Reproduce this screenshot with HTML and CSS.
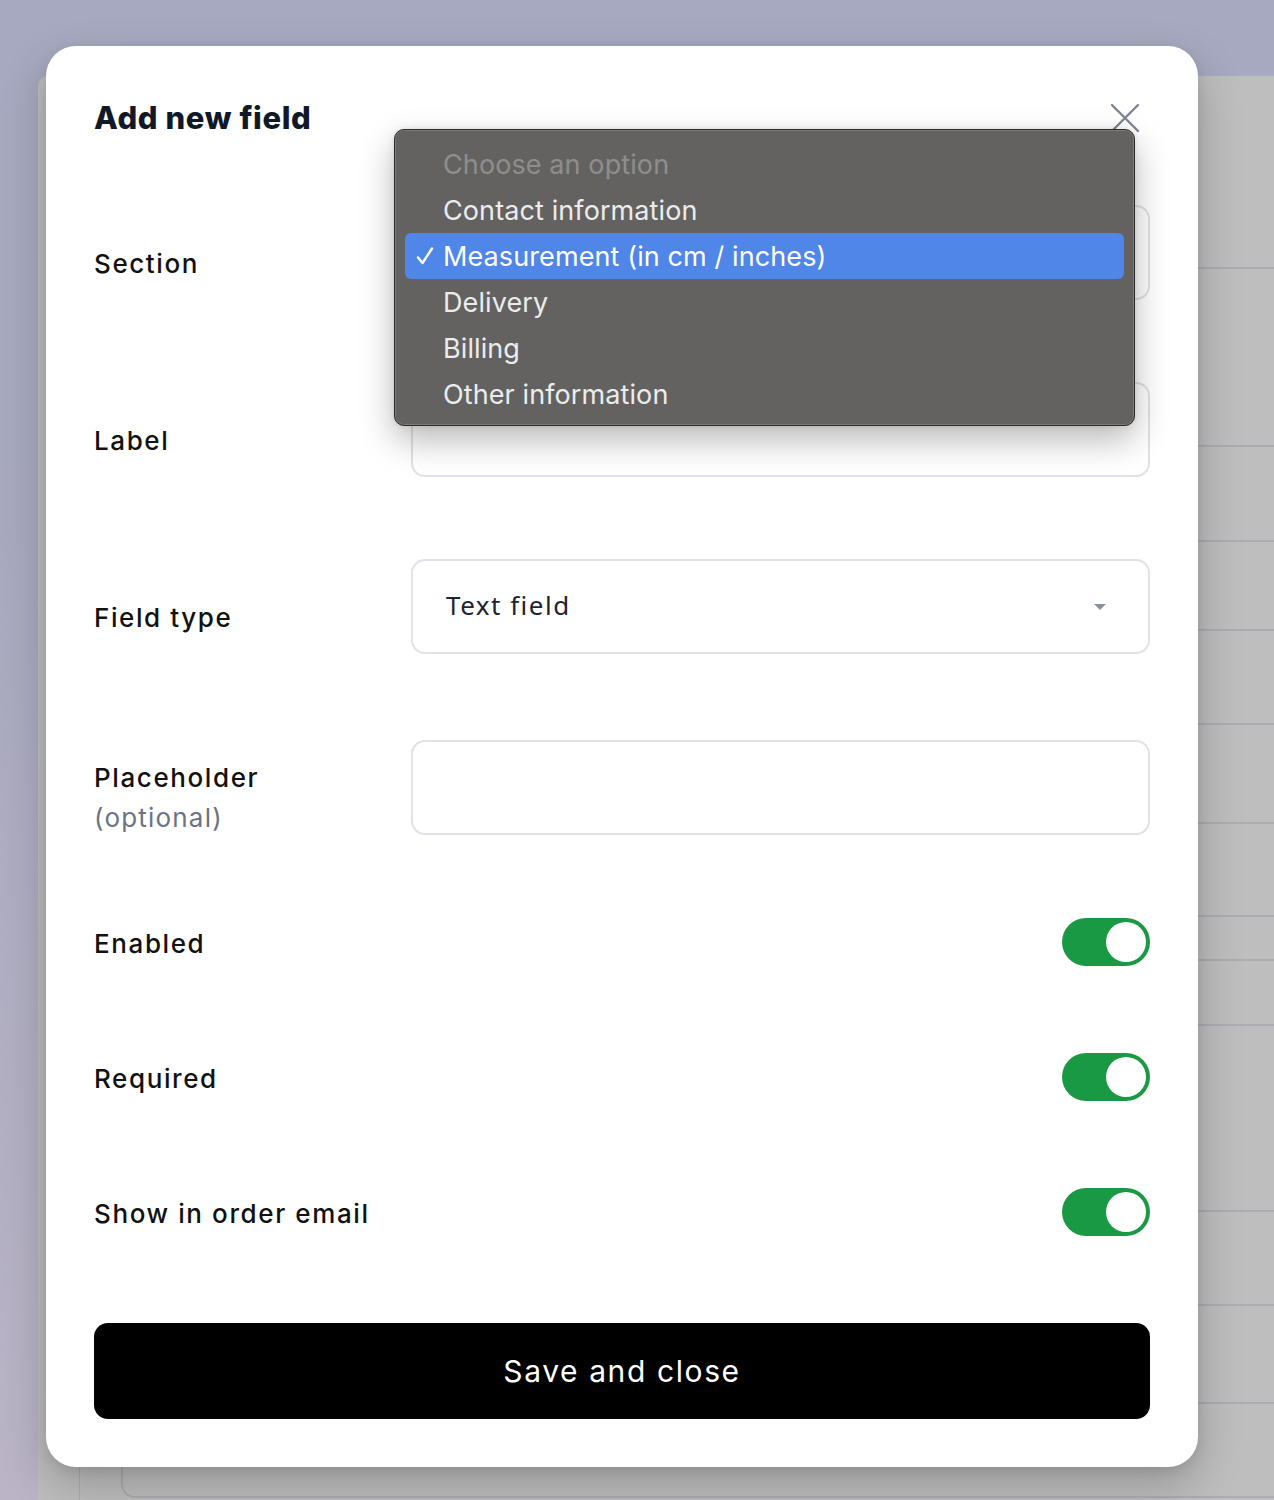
FILE: index.html
```html
<!DOCTYPE html>
<html lang="en">
<head>
<meta charset="utf-8">
<title>Add new field</title>
<link rel="stylesheet" href="styles.css">
</head>
<body>
  <!-- page behind the dialog -->
  <div class="page">
    <div class="sheet">
      <div class="rail"></div>
      <div class="sheet-body">
        <div class="line-row h193"></div>
        <div class="line-row h178"></div>
        <div class="line-row h95"></div>
        <div class="line-row h89"></div>
        <div class="line-row h94"></div>
        <div class="line-row h99"></div>
        <div class="line-row h93"></div>
        <div class="line-row h44"></div>
        <div class="line-row h65"></div>
        <div class="line-row h186"></div>
        <div class="line-row h94"></div>
        <div class="line-row h98"></div>
        <div class="last-box"></div>
      </div>
    </div>
  </div>

  <!-- dialog -->
  <div class="modal" role="dialog" aria-labelledby="modal-title">
    <header class="modal-head">
      <h2 id="modal-title" class="modal-title">Add new field</h2>
      <button class="close-btn" type="button" aria-label="Close">
        <svg width="30" height="30" viewBox="0 0 30 30" fill="none" stroke="#7f8492" stroke-width="2.4" stroke-linecap="round">
          <path d="M2 2 L28 28 M28 2 L2 28"/>
        </svg>
      </button>
    </header>

    <div class="form">
      <div class="field-row">
        <div class="field-label">Section</div>
        <div class="control">
          <div class="input select"><span class="select-value"></span><span class="caret"></span></div>
          <ul class="menu" role="listbox">
            <li class="menu-item muted"><span class="tick"></span>Choose an option</li>
            <li class="menu-item"><span class="tick"></span>Contact information</li>
            <li class="menu-item selected"><span class="tick"><svg width="18" height="18" viewBox="0 0 18 18" fill="none" stroke="#fff" stroke-width="2.4" stroke-linecap="round" stroke-linejoin="round"><path d="M2 10.5 L6.5 16 L16 1.5"/></svg></span>Measurement (in cm / inches)</li>
            <li class="menu-item"><span class="tick"></span>Delivery</li>
            <li class="menu-item"><span class="tick"></span>Billing</li>
            <li class="menu-item"><span class="tick"></span>Other information</li>
          </ul>
        </div>
      </div>

      <div class="field-row">
        <div class="field-label">Label</div>
        <div class="control"><div class="input"></div></div>
      </div>

      <div class="field-row">
        <div class="field-label">Field type</div>
        <div class="control">
          <div class="input select"><span class="select-value">Text field</span><span class="caret"></span></div>
        </div>
      </div>

      <div class="field-row">
        <div class="field-label">Placeholder<span class="optional">(optional)</span></div>
        <div class="control"><div class="input"></div></div>
      </div>

      <div class="toggle-row first">
        <div class="toggle-label">Enabled</div>
        <div class="toggle on"><span class="knob"></span></div>
      </div>
      <div class="toggle-row">
        <div class="toggle-label">Required</div>
        <div class="toggle on"><span class="knob"></span></div>
      </div>
      <div class="toggle-row">
        <div class="toggle-label">Show in order email</div>
        <div class="toggle on"><span class="knob"></span></div>
      </div>

      <button class="save-btn" type="button">Save and close</button>
    </div>
  </div>
</body>
</html>
```

FILE: styles.css
```css
html, body {
  margin: 0;
  padding: 0;
}

body {
  width: 1274px;
  height: 1500px;
  overflow: hidden;
  position: relative;
  background: linear-gradient(180deg, #a6a9bf 0%, #a8a9bf 35%, #bab4c6 100%);
  font-family: "Inter", "Liberation Sans", sans-serif;
}

/* ---------- page behind ---------- */
.page {
  padding: 76px 0 0 38px;
}

.sheet {
  display: flex;
  height: 1440px;
  background: #bebebe;
  border-top-left-radius: 10px;
}

.rail {
  width: 41px;
  flex: none;
  border-right: 1px solid #adacb2;
}

.sheet-body {
  flex: 1;
  display: flex;
  flex-direction: column;
}

.line-row {
  box-sizing: border-box;
  border-bottom: 2px solid #adacb1;
}

.h193 { height: 193px; }
.h178 { height: 178px; }
.h95 { height: 95px; }
.h89 { height: 89px; }
.h94 { height: 94px; }
.h99 { height: 99px; }
.h93 { height: 93px; }
.h44 { height: 44px; }
.h65 { height: 65px; }
.h186 { height: 186px; }
.h98 { height: 98px; }

.last-box {
  box-sizing: border-box;
  height: 94px;
  margin-left: 41px;
  border-left: 2px solid #adacb1;
  border-bottom: 2px solid #adacb1;
  border-bottom-left-radius: 14px;
}

/* ---------- dialog ---------- */
.modal {
  position: absolute;
  left: 46px;
  top: 46px;
  width: 1152px;
  height: 1421px;
  box-sizing: border-box;
  padding: 48px 48px 48px 48px;
  background: #ffffff;
  border-radius: 30px;
  box-shadow: 0 18px 45px rgba(0, 0, 0, 0.22), 0 4px 12px rgba(0, 0, 0, 0.08);
}

.modal-head {
  display: flex;
  align-items: center;
  justify-content: space-between;
  height: 48px;
}

.modal-title {
  margin: 0;
  font-size: 31px;
  line-height: 48px;
  font-weight: 800;
  color: #111827;
  letter-spacing: 0.6px;
}

.close-btn {
  border: 0;
  background: none;
  padding: 0;
  margin-right: 10px;
  display: flex;
}

.form {
  display: flex;
  flex-direction: column;
  margin-top: 63px;
}

.field-row {
  display: grid;
  grid-template-columns: 317px 1fr;
  align-items: center;
}

.field-row + .field-row {
  margin-top: 82px;
}

.field-label {
  padding-top: 22px;
  font-size: 26px;
  line-height: 40px;
  font-weight: 500;
  color: #111111;
  letter-spacing: 1.6px;
  display: flex;
  flex-direction: column;
}

.optional {
  font-weight: 400;
  color: #6b7385;
  letter-spacing: 1.2px;
}

.control {
  position: relative;
}

.input {
  box-sizing: border-box;
  height: 95px;
  border: 2px solid #e1e2e7;
  border-radius: 14px;
  background: #fff;
}

.select {
  display: flex;
  align-items: center;
  justify-content: space-between;
  padding: 0 42px 3px 33px;
}

.select-value {
  font-family: "Noto Sans", "Liberation Sans", sans-serif;
  font-size: 26px;
  color: #1f2430;
  letter-spacing: 1.5px;
}

.caret {
  width: 0;
  height: 0;
  margin-top: 3px;
  border-left: 6px solid transparent;
  border-right: 6px solid transparent;
  border-top: 6px solid #8a8f9b;
}

/* open native-style option list */
.menu {
  position: absolute;
  left: -17px;
  top: -76px;
  width: 741px;
  height: 297px;
  box-sizing: border-box;
  margin: 0;
  padding: 11px 10px 8px;
  list-style: none;
  background: #636261;
  border: 1px solid #2b2b2b;
  border-radius: 10px;
  box-shadow: inset 0 0 0 1px rgba(255, 255, 255, 0.16), 0 14px 34px rgba(0, 0, 0, 0.28), 0 0 6px rgba(0, 0, 0, 0.1);
  z-index: 2;
}

.menu-item {
  display: flex;
  align-items: center;
  height: 46px;
  padding-left: 11px;
  border-radius: 6px;
  font-size: 27px;
  letter-spacing: 0.1px;
  color: #ececec;
}

.menu-item.muted {
  color: #8f8e8d;
}

.menu-item.selected {
  background: #4f86e8;
  color: #ffffff;
}

.tick {
  width: 27px;
  flex: none;
  display: flex;
  align-items: center;
}

/* toggles */
.toggle-row {
  display: flex;
  align-items: center;
  justify-content: space-between;
  height: 48px;
  margin-top: 87px;
}

.toggle-row.first {
  margin-top: 80px;
}

.toggle-label {
  font-size: 26px;
  line-height: 40px;
  font-weight: 500;
  color: #111111;
  letter-spacing: 1.6px;
  padding-top: 4px;
}

.toggle {
  width: 88px;
  height: 48px;
  box-sizing: border-box;
  border-radius: 24px;
  background: #1a9944;
  display: flex;
  align-items: center;
  justify-content: flex-end;
  padding-right: 4px;
}

.knob {
  width: 40px;
  height: 40px;
  border-radius: 50%;
  background: #ffffff;
}

.save-btn {
  margin-top: 87px;
  height: 96px;
  border: 0;
  border-radius: 14px;
  background: #000000;
  color: #ffffff;
  font-family: "Inter", "Liberation Sans", sans-serif;
  font-size: 30px;
  font-weight: 400;
  letter-spacing: 1.6px;
}
```
